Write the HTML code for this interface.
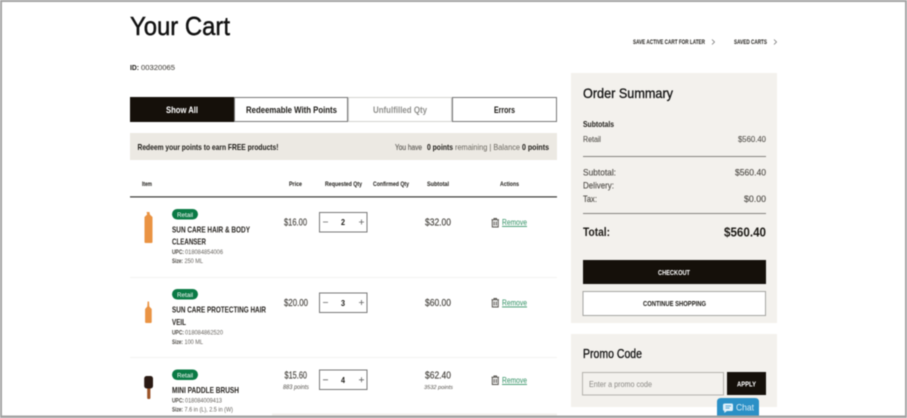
<!DOCTYPE html>
<html lang="en">
<head>
<meta charset="utf-8">
<title>Your Cart</title>
<style>
html,body{margin:0;padding:0;background:#fff;width:907px;height:418px;overflow:hidden}
svg{display:block;filter:blur(.45px)}
text{font-family:"Liberation Sans",sans-serif;fill:#1c1a16;white-space:pre}
.b{font-weight:700}
.t{stroke:#111;stroke-width:.45px;fill:#111}
.m{fill:#55524d;stroke:#55524d;stroke-width:.1px}
.hd{font-weight:700;font-size:6px}
.tab{font-weight:700;font-size:9px}
.bt{font-size:8.5px;font-weight:700;fill:#26231f}
.s{font-size:6px;fill:#66635e}
.sb{font-size:6px;fill:#4a4742;font-weight:700}
.p{font-size:10px;fill:#45423d;stroke:#45423d;stroke-width:.15px}
.rm{font-size:8.5px;fill:#2f8f62;text-decoration:underline}
.sum{font-size:9.5px;fill:#4a4742;stroke:#4a4742;stroke-width:.1px}
.btn{font-size:7px;font-weight:700}
</style>
</head>
<body>
<svg width="907" height="418" viewBox="0 0 907 418" xmlns="http://www.w3.org/2000/svg">
<defs>
<g id="trash" fill="none" stroke="#55524d" stroke-width="1">
<path d="M0.5 1.8H8M3 1.6V.5H5.5V1.6M1.3 2V9H7.2V2M3.2 3.5V7.5M5.3 3.5V7.5"/>
</g>
</defs>
<rect width="907" height="418" fill="#fff"/>

<text x="130" y="35" font-size="26" class="t" textLength="100" lengthAdjust="spacingAndGlyphs">Your Cart</text>
<text x="130" y="70" font-size="7.5" class="b" textLength="9" lengthAdjust="spacingAndGlyphs">ID:</text>
<text x="141" y="70" font-size="7.5" class="m" textLength="34" lengthAdjust="spacingAndGlyphs">00320065</text>

<text x="633" y="44" font-size="6" class="b" textLength="72" lengthAdjust="spacingAndGlyphs">SAVE ACTIVE CART FOR LATER</text>
<path d="M712 39.5L714.5 42L712 44.5" fill="none" stroke="#777" stroke-width=".8"/>
<text x="734" y="44" font-size="6" class="b" textLength="33" lengthAdjust="spacingAndGlyphs">SAVED CARTS</text>
<path d="M774 39.5L776.5 42L774 44.5" fill="none" stroke="#777" stroke-width=".8"/>

<!-- tabs -->
<rect x="130" y="97" width="104" height="25" fill="#15100a"/>
<rect x="234.5" y="97.5" width="113" height="24" fill="#fff" stroke="#777" stroke-width="1"/>
<rect x="348.5" y="97.5" width="103" height="24" fill="#fff" stroke="#d2d2cf" stroke-width="1"/>
<rect x="452.5" y="97.5" width="104" height="24" fill="#fff" stroke="#777" stroke-width="1"/>
<text x="166" y="113" class="tab" style="fill:#fff" textLength="32" lengthAdjust="spacingAndGlyphs">Show All</text>
<text x="246" y="113" class="tab" textLength="91" lengthAdjust="spacingAndGlyphs">Redeemable With Points</text>
<text x="373" y="113" class="tab" style="fill:#8f8f8c" textLength="54" lengthAdjust="spacingAndGlyphs">Unfulfilled Qty</text>
<text x="494" y="113" class="tab" textLength="21" lengthAdjust="spacingAndGlyphs">Errors</text>

<!-- banner -->
<rect x="130" y="133" width="427" height="27" fill="#ece9e3"/>
<text x="137.5" y="150" font-size="8.5" class="b" textLength="141" lengthAdjust="spacingAndGlyphs">Redeem your points to earn FREE products!</text>
<text x="395" y="150" font-size="8.5" class="m" textLength="27" lengthAdjust="spacingAndGlyphs">You have</text>
<text x="427" y="150" font-size="8.5" class="b" textLength="26" lengthAdjust="spacingAndGlyphs">0 points</text>
<text x="455" y="150" font-size="8.5" style="fill:#6a675f" textLength="65" lengthAdjust="spacingAndGlyphs">remaining | Balance</text>
<text x="522" y="150" font-size="8.5" class="b" textLength="27" lengthAdjust="spacingAndGlyphs">0 points</text>

<!-- table head -->
<text x="142" y="186" class="hd" textLength="10" lengthAdjust="spacingAndGlyphs">Item</text>
<text x="289" y="186" class="hd" textLength="13" lengthAdjust="spacingAndGlyphs">Price</text>
<text x="325" y="186" class="hd" textLength="37" lengthAdjust="spacingAndGlyphs">Requested Qty</text>
<text x="373" y="186" class="hd" textLength="36" lengthAdjust="spacingAndGlyphs">Confirmed Qty</text>
<text x="427" y="186" class="hd" textLength="22" lengthAdjust="spacingAndGlyphs">Subtotal</text>
<text x="500" y="186" class="hd" textLength="19" lengthAdjust="spacingAndGlyphs">Actions</text>
<rect x="130" y="196.3" width="427" height="1.2" fill="#3a3a38"/>

<!-- row 1 -->
<path d="M146.6 212h2.8l.5 2.500 2.600 2.500V242q0 1-1 1h-6q-1 0-1-1V217l2.600-2.500z" fill="#ea9343"/>
<rect x="172" y="209" width="26" height="10.5" rx="5.2" fill="#0a7a45"/>
<text x="177" y="216.8" font-size="6.5" style="fill:#fff" textLength="16" lengthAdjust="spacingAndGlyphs">Retail</text>
<text x="172" y="232.5" class="bt" textLength="78" lengthAdjust="spacingAndGlyphs">SUN CARE HAIR &amp; BODY</text>
<text x="172" y="244.5" class="bt" textLength="34" lengthAdjust="spacingAndGlyphs">CLEANSER</text>
<text x="172" y="254" class="sb" textLength="12" lengthAdjust="spacingAndGlyphs">UPC:</text>
<text x="185" y="254" class="s" textLength="38" lengthAdjust="spacingAndGlyphs">018084854006</text>
<text x="172" y="263" class="sb" textLength="11" lengthAdjust="spacingAndGlyphs">Size:</text>
<text x="184.5" y="263" class="s" textLength="18.5" lengthAdjust="spacingAndGlyphs">250 ML</text>
<text x="284" y="225.5" class="p" textLength="23" lengthAdjust="spacingAndGlyphs">$16.00</text>
<rect x="319.5" y="212.5" width="47.5" height="19.5" fill="#fff" stroke="#777" stroke-width="1"/>
<path d="M323 222h5M359 222h5M361.5 219.5v5" stroke="#666" stroke-width=".8" fill="none"/>
<text x="341" y="225" font-size="8" class="b" textLength="4" lengthAdjust="spacingAndGlyphs">2</text>
<text x="425" y="225.5" class="p" textLength="26" lengthAdjust="spacingAndGlyphs">$32.00</text>
<use href="#trash" x="491" y="218"/>
<text x="502" y="225" class="rm" textLength="25" lengthAdjust="spacingAndGlyphs">Remove</text>
<rect x="130" y="277" width="427" height="1" fill="#f3f3f1"/>

<!-- row 2 -->
<path d="M147.6 301.500h1.400l.3 5 2.400 2.500V322q0 1-1 1h-4.600q-1 0-1-1v-13l2.200-2.500z" fill="#ea9343"/>
<rect x="172" y="289" width="26" height="10.5" rx="5.2" fill="#0a7a45"/>
<text x="177" y="296.8" font-size="6.5" style="fill:#fff" textLength="16" lengthAdjust="spacingAndGlyphs">Retail</text>
<text x="172" y="312.5" class="bt" textLength="94" lengthAdjust="spacingAndGlyphs">SUN CARE PROTECTING HAIR</text>
<text x="172" y="325" class="bt" textLength="14" lengthAdjust="spacingAndGlyphs">VEIL</text>
<text x="172" y="334.5" class="sb" textLength="12" lengthAdjust="spacingAndGlyphs">UPC:</text>
<text x="185" y="334.5" class="s" textLength="38" lengthAdjust="spacingAndGlyphs">018084862520</text>
<text x="172" y="344" class="sb" textLength="11" lengthAdjust="spacingAndGlyphs">Size:</text>
<text x="184.5" y="344" class="s" textLength="18.5" lengthAdjust="spacingAndGlyphs">100 ML</text>
<text x="284" y="306" class="p" textLength="24" lengthAdjust="spacingAndGlyphs">$20.00</text>
<rect x="319.5" y="293" width="47.5" height="19.5" fill="#fff" stroke="#777" stroke-width="1"/>
<path d="M323 302.5h5M359 302.5h5M361.5 300v5" stroke="#666" stroke-width=".8" fill="none"/>
<text x="341" y="306" font-size="8" class="b" textLength="4" lengthAdjust="spacingAndGlyphs">3</text>
<text x="425" y="306" class="p" textLength="26" lengthAdjust="spacingAndGlyphs">$60.00</text>
<use href="#trash" x="491" y="298"/>
<text x="502" y="305.5" class="rm" textLength="25" lengthAdjust="spacingAndGlyphs">Remove</text>
<rect x="130" y="357" width="427" height="1" fill="#f3f3f1"/>

<!-- row 3 -->
<rect x="147.2" y="386" width="3.2" height="13" rx="1" fill="#9a5226"/>
<rect x="144.2" y="376" width="8.8" height="12.5" rx="2.5" fill="#2a1a14"/>
<rect x="172" y="369.5" width="26" height="10.5" rx="5.2" fill="#0a7a45"/>
<text x="177" y="377.3" font-size="6.5" style="fill:#fff" textLength="16" lengthAdjust="spacingAndGlyphs">Retail</text>
<text x="172" y="393" class="bt" textLength="67" lengthAdjust="spacingAndGlyphs">MINI PADDLE BRUSH</text>
<text x="172" y="402.5" class="sb" textLength="12" lengthAdjust="spacingAndGlyphs">UPC:</text>
<text x="185" y="402.5" class="s" textLength="37" lengthAdjust="spacingAndGlyphs">018084009413</text>
<text x="172" y="411.5" class="sb" textLength="11" lengthAdjust="spacingAndGlyphs">Size:</text>
<text x="184.5" y="411.5" class="s" textLength="48.5" lengthAdjust="spacingAndGlyphs">7.6 in (L), 2.5 in (W)</text>
<text x="284.5" y="378.5" class="p" textLength="22.5" lengthAdjust="spacingAndGlyphs">$15.60</text>
<text x="283" y="389" font-size="6.5" font-style="italic" style="fill:#55524d" textLength="26" lengthAdjust="spacingAndGlyphs">883 points</text>
<rect x="319.5" y="370" width="47.5" height="19.5" fill="#fff" stroke="#777" stroke-width="1"/>
<path d="M323 379.8h5M359 379.8h5M361.5 377.3v5" stroke="#666" stroke-width=".8" fill="none"/>
<text x="341" y="383" font-size="8" class="b" textLength="4" lengthAdjust="spacingAndGlyphs">4</text>
<text x="425" y="378.5" class="p" textLength="26" lengthAdjust="spacingAndGlyphs">$62.40</text>
<text x="424" y="389" font-size="5.5" font-style="italic" style="fill:#55524d" textLength="29" lengthAdjust="spacingAndGlyphs">3532 points</text>
<use href="#trash" x="491" y="375.5"/>
<text x="502" y="383" class="rm" textLength="25" lengthAdjust="spacingAndGlyphs">Remove</text>
<rect x="272" y="413.5" width="285" height="2" fill="#f3f1ed"/>

<!-- order summary -->
<rect x="571" y="73" width="206" height="250" fill="#f3f1ed"/>
<text x="583" y="98" font-size="14" class="t" style="stroke-width:.3px" textLength="90" lengthAdjust="spacingAndGlyphs">Order Summary</text>
<text x="583" y="127" font-size="8" class="b" textLength="31" lengthAdjust="spacingAndGlyphs">Subtotals</text>
<text x="583" y="142" font-size="8" class="m" textLength="18" lengthAdjust="spacingAndGlyphs">Retail</text>
<text x="738" y="142" font-size="8.5" class="m" textLength="28" lengthAdjust="spacingAndGlyphs">$560.40</text>
<rect x="583" y="156" width="183" height="1" fill="#85847f"/>
<text x="583" y="175.5" class="sum" textLength="33" lengthAdjust="spacingAndGlyphs">Subtotal:</text>
<text x="735" y="175.5" class="sum" textLength="31" lengthAdjust="spacingAndGlyphs">$560.40</text>
<text x="583" y="188.5" class="sum" textLength="31" lengthAdjust="spacingAndGlyphs">Delivery:</text>
<text x="583" y="202" class="sum" textLength="14" lengthAdjust="spacingAndGlyphs">Tax:</text>
<text x="744" y="202" class="sum" textLength="22" lengthAdjust="spacingAndGlyphs">$0.00</text>
<rect x="583" y="213" width="183" height="1" fill="#85847f"/>
<text x="583" y="236" font-size="11.5" class="b" textLength="27" lengthAdjust="spacingAndGlyphs">Total:</text>
<text x="724" y="236.5" font-size="12.5" class="b" textLength="42" lengthAdjust="spacingAndGlyphs">$560.40</text>
<rect x="583" y="260" width="183" height="24" fill="#15100a"/>
<text x="658" y="275" class="btn" style="fill:#fff" textLength="32" lengthAdjust="spacingAndGlyphs">CHECKOUT</text>
<rect x="583" y="291.5" width="182.5" height="24" fill="#fff" stroke="#a5a5a2" stroke-width="1"/>
<text x="643" y="306" class="btn" textLength="63" lengthAdjust="spacingAndGlyphs">CONTINUE SHOPPING</text>

<!-- promo -->
<rect x="571" y="334" width="206" height="73" fill="#f3f1ed"/>
<text x="583" y="358" font-size="12.5" class="t" style="stroke-width:.3px" textLength="59" lengthAdjust="spacingAndGlyphs">Promo Code</text>
<rect x="582.5" y="372.5" width="141" height="22.5" fill="#f3f1ed" stroke="#b5b3ad" stroke-width="1"/>
<text x="589" y="387" font-size="8.5" style="fill:#8a8884" textLength="63" lengthAdjust="spacingAndGlyphs">Enter a promo code</text>
<rect x="727" y="372" width="39" height="23" fill="#15100a"/>
<text x="737" y="386.5" class="btn" style="fill:#fff" textLength="19" lengthAdjust="spacingAndGlyphs">APPLY</text>

<!-- chat -->
<path d="M717 416V402q0-4 4-4h34q4 0 4 4v14z" fill="#2b90c6"/>
<path d="M725 403.5h6.5q1.5 0 1.5 1.5v4.5q0 1.5-1.5 1.5h-4.5l-2.7 2v-2q-1.3-.2-1.3-1.5V405q0-1.5 2-1.5z" fill="#dff0f9"/>
<path d="M725.5 406h5.500M725.5 408h4" stroke="#2b90c6" stroke-width=".7"/>
<text x="736" y="410.5" font-size="9.5" style="fill:#d8ecf7" textLength="18" lengthAdjust="spacingAndGlyphs">Chat</text>

<!-- frame -->
<rect x="0" y="0" width="907" height="2" fill="#a3a3a3"/>
<rect x="0" y="0" width="2" height="418" fill="#a3a3a3"/>
<rect x="905" y="0" width="2" height="418" fill="#a3a3a3"/>
<rect x="0" y="415.5" width="907" height="2.5" fill="#a3a3a3"/>
</svg>
</body>
</html>
